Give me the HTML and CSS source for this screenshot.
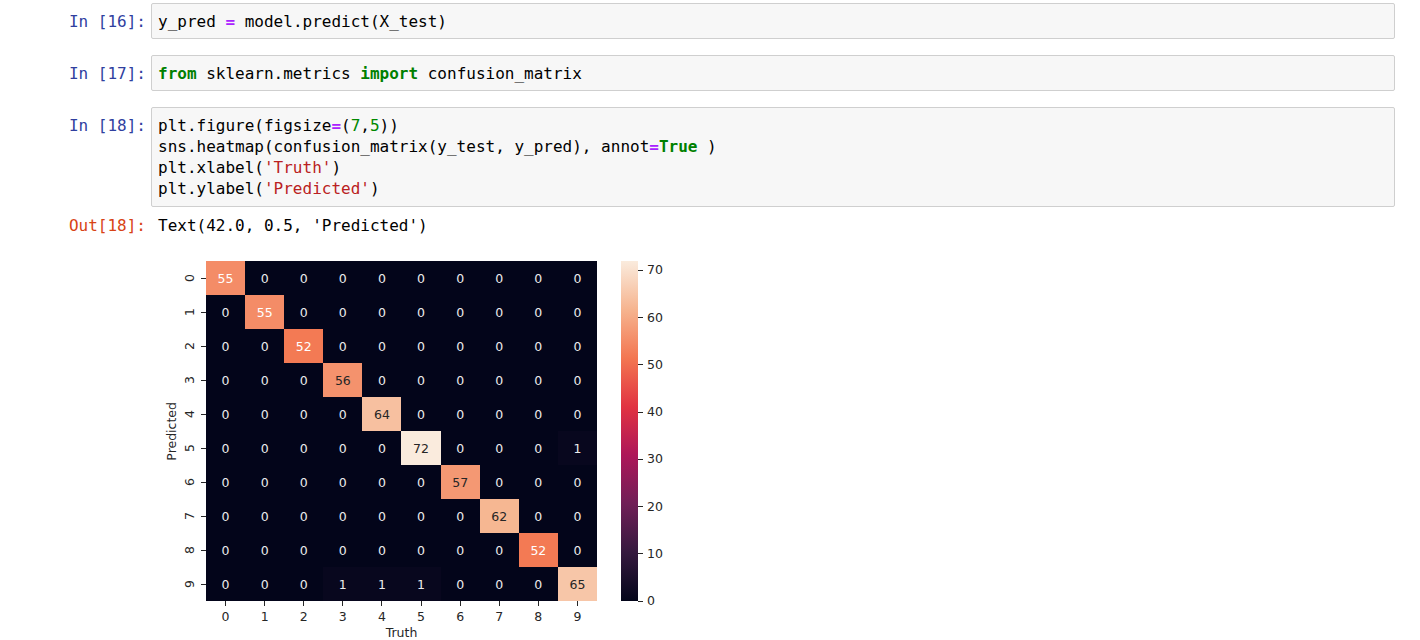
FILE: index.html
```html
<!DOCTYPE html>
<html>
<head>
<meta charset="utf-8">
<title>Notebook</title>
<link rel="stylesheet" href="styles.css">
</head>
<body>
<div class="notebook">
  <div class="cell">
    <div class="prompt in">In [16]:</div>
    <div class="input">y_pred <b class="op">=</b> model.predict(X_test)</div>
  </div>
  <div class="cell">
    <div class="prompt in">In [17]:</div>
    <div class="input"><b class="kw">from</b> sklearn.metrics <b class="kw">import</b> confusion_matrix</div>
  </div>
  <div class="cell">
    <div class="prompt in">In [18]:</div>
    <div class="input">plt.figure(figsize<b class="op">=</b>(<span class="num">7</span>,<span class="num">5</span>))
sns.heatmap(confusion_matrix(y_test, y_pred), annot<b class="op">=</b><b class="kw">True</b> )
plt.xlabel(<span class="str">'Truth'</span>)
plt.ylabel(<span class="str">'Predicted'</span>)</div>
  </div>
  <div class="out-row">
    <div class="prompt out">Out[18]:</div>
    <div class="output">
      <div class="out-text">Text(42.0, 0.5, 'Predicted')</div>
      <div class="figure">
        <div class="ylabel"><span>Predicted</span></div>
        <div class="yticks">
          <div class="ytick"><span>0</span><i></i></div>
          <div class="ytick"><span>1</span><i></i></div>
          <div class="ytick"><span>2</span><i></i></div>
          <div class="ytick"><span>3</span><i></i></div>
          <div class="ytick"><span>4</span><i></i></div>
          <div class="ytick"><span>5</span><i></i></div>
          <div class="ytick"><span>6</span><i></i></div>
          <div class="ytick"><span>7</span><i></i></div>
          <div class="ytick"><span>8</span><i></i></div>
          <div class="ytick"><span>9</span><i></i></div>
        </div>
        <div class="heat">
          <div class="matrix">
            <div class="c hi" style="background:#F48C67">55</div><div class="c">0</div><div class="c">0</div><div class="c">0</div><div class="c">0</div><div class="c">0</div><div class="c">0</div><div class="c">0</div><div class="c">0</div><div class="c">0</div>
            <div class="c">0</div><div class="c hi" style="background:#F48C67">55</div><div class="c">0</div><div class="c">0</div><div class="c">0</div><div class="c">0</div><div class="c">0</div><div class="c">0</div><div class="c">0</div><div class="c">0</div>
            <div class="c">0</div><div class="c">0</div><div class="c hi" style="background:#F37A54">52</div><div class="c">0</div><div class="c">0</div><div class="c">0</div><div class="c">0</div><div class="c">0</div><div class="c">0</div><div class="c">0</div>
            <div class="c">0</div><div class="c">0</div><div class="c">0</div><div class="c lt" style="background:#F4926D">56</div><div class="c">0</div><div class="c">0</div><div class="c">0</div><div class="c">0</div><div class="c">0</div><div class="c">0</div>
            <div class="c">0</div><div class="c">0</div><div class="c">0</div><div class="c">0</div><div class="c lt" style="background:#F7C0A0">64</div><div class="c">0</div><div class="c">0</div><div class="c">0</div><div class="c">0</div><div class="c">0</div>
            <div class="c">0</div><div class="c">0</div><div class="c">0</div><div class="c">0</div><div class="c">0</div><div class="c lt" style="background:#FAEBDD">72</div><div class="c">0</div><div class="c">0</div><div class="c">0</div><div class="c" style="background:#08071E">1</div>
            <div class="c">0</div><div class="c">0</div><div class="c">0</div><div class="c">0</div><div class="c">0</div><div class="c">0</div><div class="c lt" style="background:#F49873">57</div><div class="c">0</div><div class="c">0</div><div class="c">0</div>
            <div class="c">0</div><div class="c">0</div><div class="c">0</div><div class="c">0</div><div class="c">0</div><div class="c">0</div><div class="c">0</div><div class="c lt" style="background:#F6B792">62</div><div class="c">0</div><div class="c">0</div>
            <div class="c">0</div><div class="c">0</div><div class="c">0</div><div class="c">0</div><div class="c">0</div><div class="c">0</div><div class="c">0</div><div class="c">0</div><div class="c hi" style="background:#F37A54">52</div><div class="c">0</div>
            <div class="c">0</div><div class="c">0</div><div class="c">0</div><div class="c" style="background:#08071E">1</div><div class="c" style="background:#08071E">1</div><div class="c" style="background:#08071E">1</div><div class="c">0</div><div class="c">0</div><div class="c">0</div><div class="c lt" style="background:#F7C6A8">65</div>
          </div>
          <div class="xticks">
            <div class="xtick"><i></i><span>0</span></div>
            <div class="xtick"><i></i><span>1</span></div>
            <div class="xtick"><i></i><span>2</span></div>
            <div class="xtick"><i></i><span>3</span></div>
            <div class="xtick"><i></i><span>4</span></div>
            <div class="xtick"><i></i><span>5</span></div>
            <div class="xtick"><i></i><span>6</span></div>
            <div class="xtick"><i></i><span>7</span></div>
            <div class="xtick"><i></i><span>8</span></div>
            <div class="xtick"><i></i><span>9</span></div>
          </div>
          <div class="xlabel">Truth</div>
        </div>
        <div class="cbar"></div>
        <div class="cbticks">
          <div class="cbtick" style="bottom:97.22%"><i></i><span>70</span></div>
          <div class="cbtick" style="bottom:83.33%"><i></i><span>60</span></div>
          <div class="cbtick" style="bottom:69.44%"><i></i><span>50</span></div>
          <div class="cbtick" style="bottom:55.56%"><i></i><span>40</span></div>
          <div class="cbtick" style="bottom:41.67%"><i></i><span>30</span></div>
          <div class="cbtick" style="bottom:27.78%"><i></i><span>20</span></div>
          <div class="cbtick" style="bottom:13.89%"><i></i><span>10</span></div>
          <div class="cbtick" style="bottom:0%"><i></i><span>0</span></div>
        </div>
      </div>
    </div>
  </div>
</div>
</body>
</html>
```

FILE: styles.css
```css
html, body {
  margin: 0;
  padding: 0;
  background: #ffffff;
}

.notebook {
  padding-top: 2.5px;
  padding-right: 25px;
  font-family: "DejaVu Sans Mono", "Liberation Mono", monospace;
  font-size: 16px;
  line-height: 21px;
  color: #000000;
}

.cell {
  display: flex;
  align-items: flex-start;
}

.cell + .cell {
  margin-top: 15.5px;
}

.cell + .cell + .cell {
  margin-top: 16px;
}

.prompt {
  flex: none;
  width: 146px;
  margin-right: 5px;
  text-align: right;
  white-space: pre;
}

.prompt.in {
  color: #303F9F;
  padding-top: 8px;
}

.prompt.out {
  color: #D84315;
}

.input {
  flex: 1;
  min-width: 0;
  background: #f7f7f7;
  border: 1px solid #cfcfcf;
  border-radius: 2px;
  padding: 7px 6px 6.5px;
  white-space: pre;
}

.op {
  color: #AA22FF;
  font-weight: bold;
}

.kw {
  color: #008000;
  font-weight: bold;
}

.num {
  color: #008800;
}

.str {
  color: #BA2121;
}

.out-row {
  display: flex;
  align-items: flex-start;
  margin-top: 8.5px;
}

.output {
  padding-left: 7px;
}

.out-text {
  white-space: pre;
}

/* ---------- heatmap figure ---------- */
.figure {
  display: flex;
  align-items: flex-start;
  margin-top: 25px;
  font-family: "DejaVu Sans", sans-serif;
  font-size: 12.5px;
  color: #262626;
}

.ylabel {
  height: 340px;
  margin-left: 7px;
  display: flex;
  align-items: center;
}

.ylabel span {
  writing-mode: vertical-rl;
  transform: rotate(180deg);
  line-height: 14px;
}

.yticks {
  width: 27px;
  display: flex;
  flex-direction: column;
}

.ytick {
  height: 34px;
  display: flex;
  align-items: center;
}

.ytick span {
  margin-left: 5px;
  writing-mode: vertical-rl;
  transform: rotate(180deg);
  line-height: 12px;
}

.ytick i {
  margin-left: auto;
  width: 5px;
  height: 1px;
  background: #262626;
}

.heat {
  width: 391px;
  flex: none;
}

.matrix {
  height: 340px;
  display: grid;
  grid-template-columns: repeat(10, 1fr);
  grid-template-rows: repeat(10, 1fr);
  background: #03051A;
}

.c {
  display: flex;
  align-items: center;
  justify-content: center;
  color: #ececec;
}

.c.hi {
  color: #ffffff;
}

.c.lt {
  color: #262626;
}

.xticks {
  display: grid;
  grid-template-columns: repeat(10, 1fr);
}

.xtick {
  display: flex;
  flex-direction: column;
  align-items: center;
}

.xtick i {
  width: 1px;
  height: 5px;
  background: #262626;
}

.xtick span {
  margin-top: 3.5px;
  line-height: 14px;
}

.xlabel {
  margin-top: 2px;
  text-align: center;
  line-height: 14px;
}

.cbar {
  flex: none;
  margin-left: 24px;
  width: 17px;
  height: 340px;
  background: linear-gradient(to top,
    #03051A 0%,
    #35193E 14.3%,
    #701F57 28.6%,
    #AD1759 42.9%,
    #E13342 57.1%,
    #F37651 71.4%,
    #F6B48F 85.7%,
    #FAEBDD 100%);
}

.cbticks {
  position: relative;
  width: 40px;
  height: 340px;
}

.cbtick {
  position: absolute;
  left: 0;
  display: flex;
  align-items: center;
  transform: translateY(50%);
  line-height: 14px;
}

.cbtick i {
  width: 5px;
  height: 1px;
  background: #262626;
}

.cbtick span {
  margin-left: 4px;
}
```
